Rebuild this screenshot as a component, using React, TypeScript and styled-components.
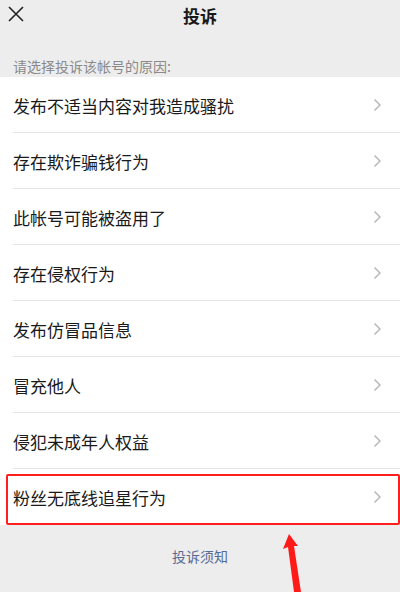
import styled, { createGlobalStyle } from "styled-components"

const GlobalStyle = createGlobalStyle`
    html, body {
        margin: 0;
        padding: 0;
        background: #ededed;
    }
    body {
        font-family: "Noto Sans CJK SC", "Noto Sans", sans-serif;
    }
`

const Page = styled.div`
    width: 400px;
    height: 592px;
    overflow: hidden;
    background: #ededed;
    display: flex;
    flex-direction: column;
`

const Header = styled.div`
    height: 32px;
    display: flex;
    align-items: center;
    justify-content: center;
    position: relative;
`

const CloseButton = styled.div`
    position: absolute;
    left: 8px;
    top: 6px;
    width: 16px;
    height: 16px;
    display: flex;
`

const Title = styled.div`
    font-size: 17px;
    font-weight: bold;
    color: #191919;
    line-height: 32px;
`

const Hint = styled.div`
    padding: 24px 13px 1px;
    font-size: 14px;
    line-height: 20px;
    color: #8a8a8a;
`

const List = styled.div`
    background: #fff;
    display: flex;
    flex-direction: column;
`

const Row = styled.div<{ $last?: boolean }>`
    height: 56px;
    position: relative;
    display: flex;
    align-items: center;
    justify-content: space-between;
    padding: 0 18px 0 13px;
    &::after {
        content: "";
        display: ${(p) => (p.$last ? "none" : "block")};
        position: absolute;
        left: 13px;
        right: 0;
        bottom: 0;
        height: 1px;
        background: #e6e6e6;
    }
`

const RowText = styled.span`
    font-size: 17px;
    color: #1a1a1a;
`

const Highlight = styled.div`
    position: absolute;
    left: 6px;
    right: 0;
    top: 5px;
    bottom: 0;
    border: 2px solid #ff1f1f;
    border-radius: 2px;
`

const Footer = styled.div`
    flex: 1;
    position: relative;
    padding-top: 21px;
    display: flex;
    justify-content: center;
`

const FooterLink = styled.span`
    font-size: 14px;
    line-height: 20px;
    color: #576b95;
`

const Arrow = styled.svg`
    position: absolute;
    left: 0;
    top: 0;
`

const reasons = [
    "发布不适当内容对我造成骚扰",
    "存在欺诈骗钱行为",
    "此帐号可能被盗用了",
    "存在侵权行为",
    "发布仿冒品信息",
    "冒充他人",
    "侵犯未成年人权益",
    "粉丝无底线追星行为",
]

function Chevron() {
    return (
        <svg width="9" height="14" viewBox="0 0 9 14">
            <path d="M1.5 1.5 L7 7 L1.5 12.5" fill="none" stroke="#b3b3b3" strokeWidth="1.4" />
        </svg>
    )
}

function App() {
    return (
        <Page>
            <GlobalStyle />
            <Header>
                <CloseButton>
                    <svg width="16" height="16" viewBox="0 0 16 16">
                        <path d="M1 1 L15 15 M15 1 L1 15" stroke="#222" strokeWidth="1.6" />
                    </svg>
                </CloseButton>
                <Title>投诉</Title>
            </Header>
            <Hint>请选择投诉该帐号的原因:</Hint>
            <List>
                {reasons.map((r, i) => (
                    <Row key={r} $last={i === reasons.length - 1}>
                        <RowText>{r}</RowText>
                        <Chevron />
                        {i === reasons.length - 1 && <Highlight />}
                    </Row>
                ))}
            </List>
            <Footer>
                <FooterLink>投诉须知</FooterLink>
                <Arrow width="400" height="67" viewBox="0 0 400 67">
                    <polygon
                        points="289,9 298,21 294,21 301,67 294,67 288,22 283,24"
                        fill="#ff1a1a"
                    />
                </Arrow>
            </Footer>
        </Page>
    )
}

export default App
